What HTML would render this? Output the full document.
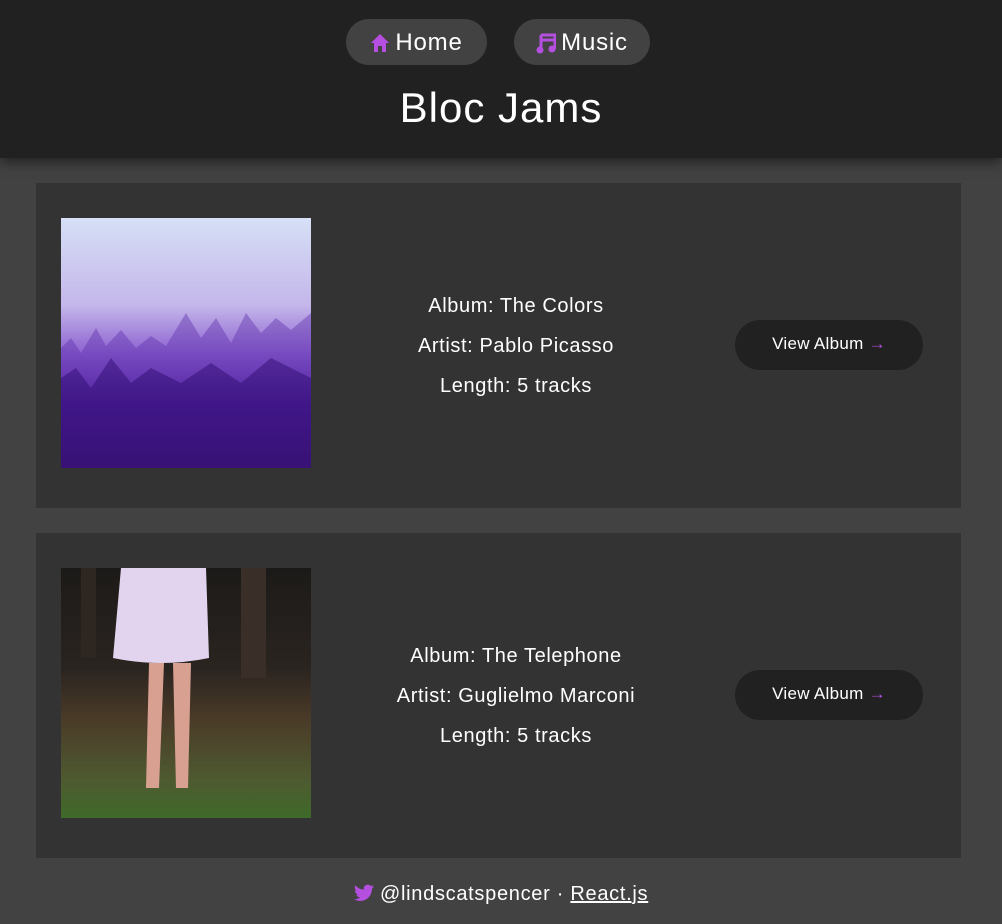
<!DOCTYPE html>
<html><head><meta charset="utf-8"><style>
*{box-sizing:border-box;margin:0;padding:0}
body{width:1002px;height:924px;background:#424242;font-family:"Liberation Sans",sans-serif;color:#fff;overflow:hidden;position:relative}
header{position:absolute;left:0;top:0;width:1002px;height:158px;background:#212121;box-shadow:0 4px 12px rgba(0,0,0,.5)}
.nav{position:absolute;top:19px;height:46px;border-radius:23px;background:#424242;font-size:24px;letter-spacing:0.8px;line-height:46px;display:flex;align-items:center;justify-content:center;gap:5px;padding-top:2px}
h1{position:absolute;top:84px;left:0;width:1002px;text-align:center;font-size:42px;letter-spacing:1px;font-weight:normal}
.card{position:absolute;left:36px;width:925px;height:325px;background:#333}
.img{position:absolute;left:25px;top:35px;width:250px;height:250px;overflow:hidden}
.info{position:absolute;left:330px;width:300px;top:103px;text-align:center;font-size:20px;letter-spacing:0.6px;line-height:40px}
.btn{position:absolute;left:699px;top:137px;width:188px;height:50px;border-radius:25px;background:#212121;font-size:17px;letter-spacing:0.3px;line-height:48px;text-align:center}
.btn span{color:#b44fe0}
footer{position:absolute;top:883px;left:0;width:1002px;text-align:center;font-size:20px;letter-spacing:0.7px}
footer u{text-decoration:underline}
</style></head><body>
<header>
<div class="nav" style="left:346px;width:141px"><svg width="20" height="20" viewBox="0 0 20 20"><path d="M10 1 L1 10 H4 V19 H8 V13 H12 V19 H16 V10 H19 Z" fill="#b44fe0"/></svg>Home</div>
<div class="nav" style="left:514px;width:136px"><svg width="20" height="22" viewBox="0 0 20 22"><path d="M5 3 H19 V17" stroke="#b44fe0" stroke-width="3" fill="none"/><path d="M5 3 V18 M5 8 H19" stroke="#b44fe0" stroke-width="3" fill="none"/><circle cx="4" cy="18" r="3.5" fill="#b44fe0"/><circle cx="16" cy="17" r="3.5" fill="#b44fe0"/></svg>Music</div>
<h1>Bloc Jams</h1>
</header>
<div class="card" style="top:183px">
<div class="img" style="background:linear-gradient(#d6e0f6 0%,#c4b6ea 35%,#8a5ed0 55%,#4a1a9a 75%,#2e0b5e 100%)">
<svg width="250" height="250" viewBox="0 0 250 250"><path d="M0 130 L10 120 L20 135 L35 110 L45 128 L60 112 L75 130 L90 118 L105 128 L125 95 L140 120 L155 100 L170 125 L185 95 L200 115 L215 100 L230 112 L250 95 V250 H0Z" fill="#5a2aa8" opacity=".4"/><path d="M0 160 L15 150 L30 170 L50 140 L70 165 L90 150 L120 165 L150 145 L180 165 L210 140 L250 160 V250 H0Z" fill="#300c70" opacity=".5"/></svg></div>
<div class="info">Album: The Colors<br>Artist: Pablo Picasso<br>Length: 5 tracks</div>
<div class="btn">View Album <span>→</span></div>
</div>
<div class="card" style="top:533px">
<div class="img" style="background:linear-gradient(#1c1a18 0%,#2a2420 40%,#4a3a28 60%,#4e5a30 85%,#3e6a2a 100%)">
<svg width="250" height="250" viewBox="0 0 250 250"><path d="M60 0 H145 L148 90 Q100 100 52 90 Z" fill="#e2d4ee"/><path d="M88 95 L85 220 H98 L103 95 Z M112 95 L115 220 H127 L130 95Z" fill="#d8a090"/><rect x="180" y="0" width="25" height="110" fill="#3a2e28"/><rect x="20" y="0" width="15" height="90" fill="#2e2620"/></svg></div>
<div class="info">Album: The Telephone<br>Artist: Guglielmo Marconi<br>Length: 5 tracks</div>
<div class="btn">View Album <span>→</span></div>
</div>
<footer><svg width="20" height="18" viewBox="0 0 24 20" style="vertical-align:-2px"><path d="M24 2.4a10 10 0 0 1-2.8.8A5 5 0 0 0 23.3.4a10 10 0 0 1-3.1 1.2A4.9 4.9 0 0 0 11.8 6 14 14 0 0 1 1.7.9a4.9 4.9 0 0 0 1.5 6.6A4.9 4.9 0 0 1 1 6.9a4.9 4.9 0 0 0 3.9 4.8 5 5 0 0 1-2.2.1 4.9 4.9 0 0 0 4.6 3.4A9.9 9.9 0 0 1 0 17.3 14 14 0 0 0 7.5 19.5c9 0 14-7.5 14-14v-.6A10 10 0 0 0 24 2.4z" fill="#b44fe0"/></svg> @lindscatspencer · <u>React.js</u></footer>
</body></html>
